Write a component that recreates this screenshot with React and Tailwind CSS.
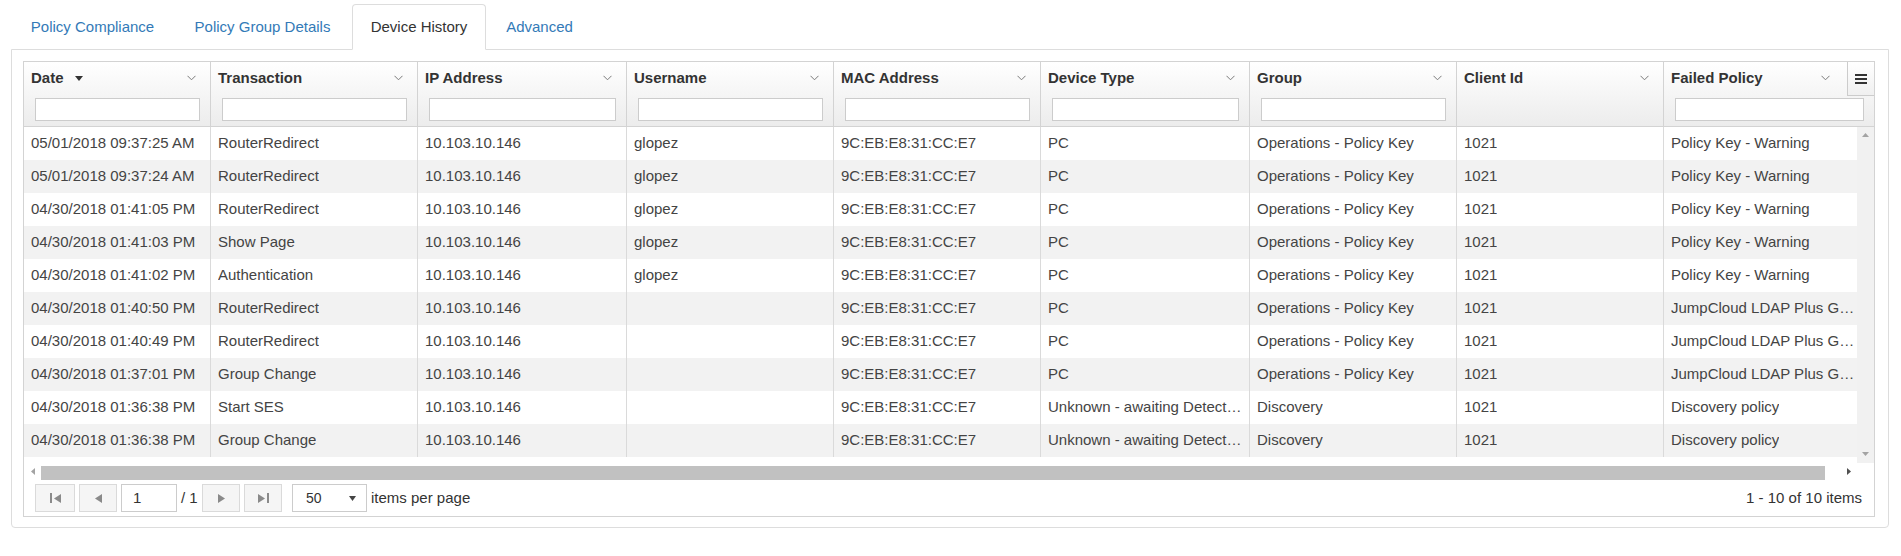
import React from 'react';

const COLS = 'grid grid-cols-[187px_207px_209px_207px_207px_209px_207px_207px_minmax(0,1fr)]';

const columns = [
  { key: 'date', title: 'Date', sorted: true },
  { key: 'transaction', title: 'Transaction' },
  { key: 'ip', title: 'IP Address' },
  { key: 'username', title: 'Username' },
  { key: 'mac', title: 'MAC Address' },
  { key: 'device', title: 'Device Type' },
  { key: 'group', title: 'Group' },
  { key: 'client', title: 'Client Id', noFilter: true },
  { key: 'policy', title: 'Failed Policy', last: true },
];

const MAC = '9C:EB:E8:31:CC:E7';
const IP = '10.103.10.146';
const OPS = 'Operations - Policy Key';
const WARN = 'Policy Key - Warning';
const JUMP = 'JumpCloud LDAP Plus Guest Policy';
const UNKNOWN = 'Unknown - awaiting Detection';

const rows = [
  ['05/01/2018 09:37:25 AM', 'RouterRedirect', IP, 'glopez', MAC, 'PC', OPS, '1021', WARN],
  ['05/01/2018 09:37:24 AM', 'RouterRedirect', IP, 'glopez', MAC, 'PC', OPS, '1021', WARN],
  ['04/30/2018 01:41:05 PM', 'RouterRedirect', IP, 'glopez', MAC, 'PC', OPS, '1021', WARN],
  ['04/30/2018 01:41:03 PM', 'Show Page', IP, 'glopez', MAC, 'PC', OPS, '1021', WARN],
  ['04/30/2018 01:41:02 PM', 'Authentication', IP, 'glopez', MAC, 'PC', OPS, '1021', WARN],
  ['04/30/2018 01:40:50 PM', 'RouterRedirect', IP, '', MAC, 'PC', OPS, '1021', JUMP],
  ['04/30/2018 01:40:49 PM', 'RouterRedirect', IP, '', MAC, 'PC', OPS, '1021', JUMP],
  ['04/30/2018 01:37:01 PM', 'Group Change', IP, '', MAC, 'PC', OPS, '1021', JUMP],
  ['04/30/2018 01:36:38 PM', 'Start SES', IP, '', MAC, UNKNOWN, 'Discovery', '1021', 'Discovery policy'],
  ['04/30/2018 01:36:38 PM', 'Group Change', IP, '', MAC, UNKNOWN, 'Discovery', '1021', 'Discovery policy'],
];

const tabs = [
  { label: 'Policy Compliance', w: 'w-[161px]' },
  { label: 'Policy Group Details', w: 'w-[173px]' },
  { label: 'Device History', w: 'w-[134px]', active: true },
  { label: 'Advanced', w: 'w-[101px]' },
];

const Chevron = () => (
  <svg width="9" height="6" viewBox="0 0 9 6" className="shrink-0">
    <polyline points="0.5,0.8 4.5,4.8 8.5,0.8" fill="none" stroke="#7a7a7a" strokeWidth="1" />
  </svg>
);

const SortArrow = () => (
  <svg width="8" height="5" viewBox="0 0 8 5">
    <polygon points="0,0 8,0 4,5" fill="#333" />
  </svg>
);

const Tri = ({ dir, size = 8, color = '#8a8a8a' }) => {
  const h = size;
  const w = Math.round(size * 0.8);
  const pts = dir === 'left' ? `${w},0 ${w},${h} 0,${h / 2}` : `0,0 0,${h} ${w},${h / 2}`;
  return (
    <svg width={w} height={h} viewBox={`0 0 ${w} ${h}`}>
      <polygon points={pts} fill={color} />
    </svg>
  );
};

const SmallTri = ({ dir }) => {
  const map = {
    up: '0,4 7,4 3.5,0',
    down: '0,0 7,0 3.5,4',
  };
  const isV = dir === 'up' || dir === 'down';
  if (isV) {
    return (
      <svg width="7" height="4" viewBox="0 0 7 4">
        <polygon points={map[dir]} fill="#a3a3a3" />
      </svg>
    );
  }
  const pts = dir === 'left' ? '4,0 4,7 0,3.5' : '0,0 0,7 4,3.5';
  return (
    <svg width="4" height="7" viewBox="0 0 4 7">
      <polygon points={pts} fill={dir === 'left' ? '#a3a3a3' : '#505050'} />
    </svg>
  );
};

const PagerButton = ({ w, children }) => (
  <div className={`flex h-[28px] ${w} items-center justify-center border border-[#dadada] bg-[#f5f5f5]`}>
    {children}
  </div>
);

const App = () => {
  return (
    <div className="min-h-[556px] bg-white pl-[11px] pr-[12px] pt-[4px] font-['Liberation_Sans',Arial,sans-serif]">
      {/* Tabs */}
      <div className="relative z-10 -mb-px ml-px flex gap-[3px]">
        {tabs.map((t) => (
          <div
            key={t.label}
            className={`flex h-[46px] ${t.w} items-center justify-center rounded-t-[4px] border text-[15px] ${
              t.active
                ? 'border-[#dddddd] border-b-white bg-white text-[#333]'
                : 'border-transparent text-[#337ab7]'
            }`}
          >
            {t.label}
          </div>
        ))}
      </div>

      {/* Tab content */}
      <div className="rounded-b-[4px] border border-[#dddddd] pb-[10px] pl-[11px] pr-[13px] pt-[11px]">
        <div className="border border-[#d3d3d3] text-[15px] text-[#333]">
          {/* Header */}
          <div className={`${COLS} relative h-[65px] border-b border-[#d3d3d3] bg-gradient-to-b from-white to-[#ececec]`}>
            {columns.map((c) => (
              <div key={c.key} className={`flex min-w-0 flex-col ${c.last ? '' : 'border-r border-[#d3d3d3]'}`}>
                <div className={`flex h-[32px] items-center justify-between pl-[7px] ${c.last ? 'pr-[44px]' : 'pr-[14px]'}`}>
                  <span className="flex items-center gap-[11px] font-bold text-[#333]">
                    {c.title}
                    {c.sorted && <SortArrow />}
                  </span>
                  <Chevron />
                </div>
                {!c.noFilter && (
                  <input
                    type="text"
                    className="ml-[11px] mr-[10px] mt-[4px] h-[23px] w-auto min-w-0 border border-[#cccccc] bg-white outline-none"
                  />
                )}
              </div>
            ))}
            <div className="absolute right-0 top-0 flex h-[34px] w-[27px] items-center justify-center border-b border-l border-[#cccccc] bg-gradient-to-b from-white to-[#f0f0f0]">
              <svg width="12" height="10" viewBox="0 0 12 10">
                <rect x="0" y="0" width="12" height="2" fill="#333" />
                <rect x="0" y="4" width="12" height="2" fill="#333" />
                <rect x="0" y="8" width="12" height="2" fill="#333" />
              </svg>
            </div>
          </div>

          {/* Body */}
          <div className="flex h-[336px]">
            <div className="min-w-0 flex-1 overflow-hidden">
              {rows.map((r, i) => (
                <div key={i} className={`${COLS} h-[33px] ${i % 2 === 1 ? 'bg-[#f2f2f2]' : 'bg-white'}`}>
                  {r.map((v, j) => (
                    <div
                      key={j}
                      className={`flex min-w-0 items-center pl-[7px] text-[#444] ${
                        j === r.length - 1 ? '' : 'border-r border-[#dadada] pr-[7px]'
                      }`}
                    >
                      <span className="truncate">{v}</span>
                    </div>
                  ))}
                </div>
              ))}
            </div>
            <div className="flex w-[17px] flex-col items-center justify-between bg-[#f1f1f1] pb-[7px] pt-[6px]">
              <SmallTri dir="up" />
              <SmallTri dir="down" />
            </div>
          </div>

          {/* Horizontal scrollbar */}
          <div className="flex h-[17px]">
            <div className="flex flex-1">
              <div className="flex w-[17px] items-center justify-center">
                <SmallTri dir="left" />
              </div>
              <div className="flex-1">
                <div className="mt-[3px] h-[14px] w-[1784px] bg-[#c1c1c1]" />
              </div>
              <div className="flex w-[17px] items-center justify-center">
                <SmallTri dir="right" />
              </div>
            </div>
            <div className="w-[17px] bg-white" />
          </div>

          {/* Pager */}
          <div className="flex h-[36px] items-center justify-between pl-[11px] pr-[12px]">
            <div className="flex items-center">
              <PagerButton w="w-[40px]">
                <div className="flex items-center gap-[2px]">
                  <div className="h-[10px] w-[2px] bg-[#8a8a8a]" />
                  <Tri dir="left" size={9} />
                </div>
              </PagerButton>
              <div className="ml-[4px]">
                <PagerButton w="w-[38px]">
                  <Tri dir="left" size={9} />
                </PagerButton>
              </div>
              <div className="ml-[4px] flex h-[28px] w-[56px] items-center border border-[#cccccc] bg-white pl-[11px]">
                1
              </div>
              <span className="ml-[4px] w-[21px]">/ 1</span>
              <PagerButton w="w-[38px]">
                <Tri dir="right" size={9} />
              </PagerButton>
              <div className="ml-[4px]">
                <PagerButton w="w-[38px]">
                  <div className="flex items-center gap-[2px]">
                    <Tri dir="right" size={9} />
                    <div className="h-[10px] w-[2px] bg-[#8a8a8a]" />
                  </div>
                </PagerButton>
              </div>
              <div className="ml-[10px] flex h-[28px] w-[75px] items-center justify-between border border-[#cccccc] bg-white pl-[13px] pr-[10px] text-[14px]">
                <span>50</span>
                <svg width="7" height="5" viewBox="0 0 7 5">
                  <polygon points="0,0 7,0 3.5,5" fill="#444" />
                </svg>
              </div>
              <span className="ml-[4px]">items per page</span>
            </div>
            <span>1 - 10 of 10 items</span>
          </div>
        </div>
      </div>
    </div>
  );
};

export default App;
